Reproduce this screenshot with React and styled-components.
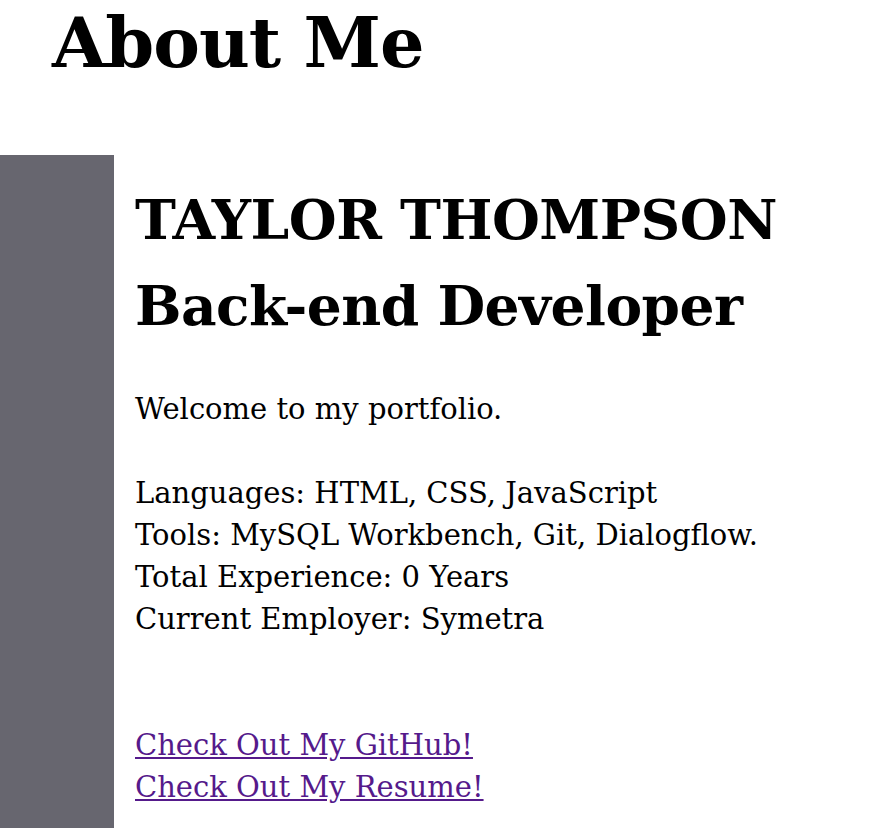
import styled, { createGlobalStyle } from "styled-components";

const GlobalStyle = createGlobalStyle`
    html, body {
        margin: 0;
        padding: 0;
        background: #ffffff;
    }
    body {
        font-family: "DejaVu Serif", "Liberation Serif", serif;
        color: #000000;
    }
`;

const Page = styled.div`
    display: flex;
    flex-direction: column;
    min-height: 828px;
`;

const Header = styled.header`
    height: 155px;
    padding-left: 52px;
    box-sizing: border-box;
`;

const Title = styled.h1`
    margin: 0;
    font-size: 70px;
    font-weight: 700;
    line-height: 86px;
    letter-spacing: -1px;
`;

const Section = styled.section`
    flex: 1;
    display: flex;
`;

const Sidebar = styled.aside`
    width: 114px;
    flex-shrink: 0;
    background: #67666f;
`;

const Content = styled.div`
    flex: 1;
    padding: 22px 0 0 21px;
`;

const Name = styled.h2`
    margin: 0 0 39px;
    font-size: 55px;
    font-weight: 700;
    line-height: 86px;
    letter-spacing: -0.5px;
`;

const Text = styled.p`
    margin: 0;
    font-size: 29px;
    line-height: 42px;
`;

const Links = styled.div`
    display: flex;
    flex-direction: column;
    margin-top: 84px;
`;

const Link = styled.a`
    font-size: 29px;
    line-height: 42px;
    color: #551a8b;
    text-decoration: underline;
    width: fit-content;
`;

const details = [
    "Languages: HTML, CSS, JavaScript",
    "Tools: MySQL Workbench, Git, Dialogflow.",
    "Total Experience: 0 Years",
    "Current Employer: Symetra",
];

export default function App() {
    return (
        <Page>
            <GlobalStyle/>
            <Header>
                <Title>About Me</Title>
            </Header>
            <Section>
                <Sidebar/>
                <Content>
                    <Name>
                        TAYLOR THOMPSON<br/>
                        Back-end Developer
                    </Name>
                    <Text>
                        Welcome to my portfolio.<br/><br/>
                        {details.map(line => (
                            <span key={line}>{line}<br/></span>
                        ))}
                    </Text>
                    <Links>
                        <Link href="#github">Check Out My GitHub!</Link>
                        <Link href="#resume">Check Out My Resume!</Link>
                    </Links>
                </Content>
            </Section>
        </Page>
    );
}
